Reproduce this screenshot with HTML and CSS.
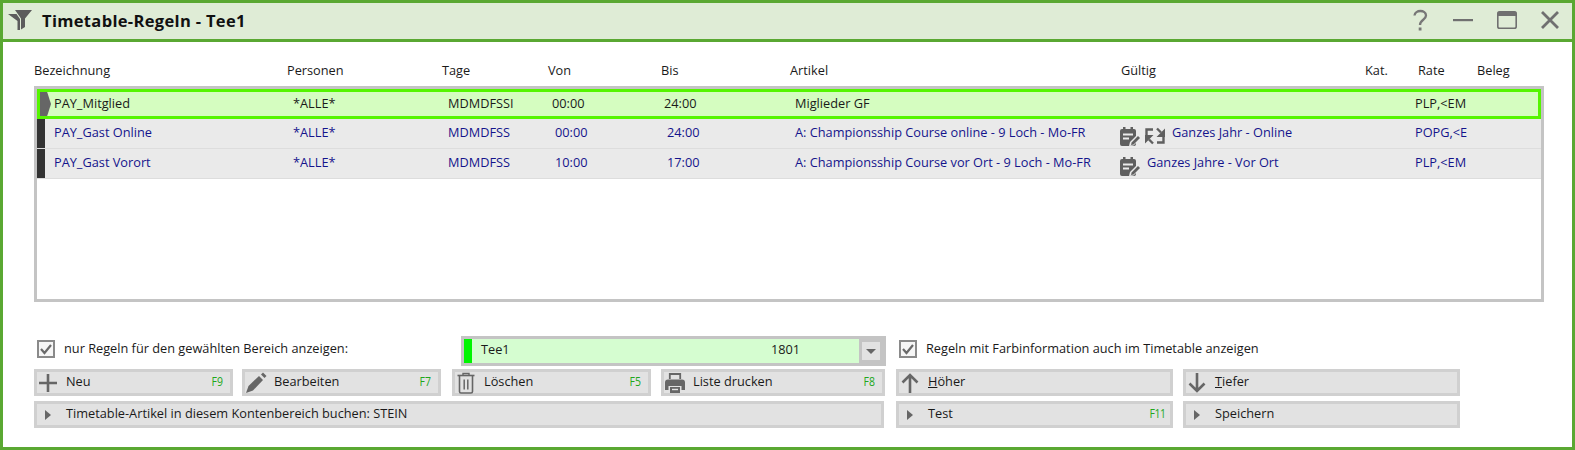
FILE: index.html
```html
<!DOCTYPE html>
<html lang="de">
<head>
<meta charset="utf-8">
<title>Timetable-Regeln - Tee1</title>
<link rel="stylesheet" href="styles.css">
</head>
<body>
<div class="window">
  <header class="titlebar">
    <svg class="title-icon" viewBox="0 0 24 20"><path d="M0 4h8.5l3.5 5v11H9.5V11z" fill="#5c5c5c"/><path d="M7 0h17l-7 8.5V17l-4 2.500V8.500z" fill="#5c5c5c"/></svg>
    <h1 class="title">Timetable-Regeln - Tee1</h1>
    <div class="win-controls">
      <svg class="win-icon" viewBox="0 0 24 24"><path d="M6.500 7.500c.5-6 11.500-6 11.500 0 0 4.500-6 4-6 9.500" fill="none" stroke="#777" stroke-width="2.300"/><rect x="10.700" y="19.500" width="2.800" height="3" fill="#777"/></svg>
      <svg class="win-icon" viewBox="0 0 24 24"><rect x="2" y="11" width="20" height="2.200" fill="#707070"/></svg>
      <svg class="win-icon" viewBox="0 0 24 24"><rect x="2.800" y="3.800" width="18.400" height="16.400" rx="1.800" fill="none" stroke="#707070" stroke-width="1.600"/><rect x="2.800" y="3.800" width="18.400" height="4.200" fill="#707070"/></svg>
      <svg class="win-icon" viewBox="0 0 24 24"><path d="M4 4l16 16M20 4L4 20" stroke="#707070" stroke-width="2.800"/></svg>
    </div>
  </header>
  <main class="content">
    <div class="col-head">
      <span>Bezeichnung</span><span>Personen</span><span>Tage</span><span>Von</span><span>Bis</span><span>Artikel</span><span>Gültig</span><span>Kat.</span><span>Rate</span><span>Beleg</span>
    </div>
    <div class="list">
      <div class="row row-active">
        <span class="row-marker"></span>
        <div class="cells">
          <span>PAY_Mitglied</span><span>*ALLE*</span><span>MDMDFSSI</span><span class="shift-l">00:00</span><span class="shift-l">24:00</span><span>Miglieder GF</span><span></span><span>PLP,&lt;EM</span>
        </div>
      </div>
      <div class="row">
        <span class="row-bar"></span>
        <div class="cells">
          <span>PAY_Gast Online</span><span>*ALLE*</span><span>MDMDFSS</span><span>00:00</span><span>24:00</span><span>A: Championsship Course online - 9 Loch - Mo-FR</span>
          <span class="valid">
            <svg class="cal" viewBox="0 0 22 20"><path d="M1 5a2 2 0 0 1 2-2h1V1h2.500v2h5V1H14v2h1a2 2 0 0 1 2 2v13a2 2 0 0 1-2 2H3a2 2 0 0 1-2-2z" fill="#5f5f5f"/><path d="M4 8.500h10M4 12.500h6" stroke="#eaeaea" stroke-width="1.800"/><path d="M10 20l1-4 8-8 3.500 3.500-8 8z" fill="#eaeaea"/><path d="M12 19l.6-2.500 6.400-6.400 2 2-6.400 6.400z" fill="#5f5f5f"/></svg>
            <svg class="cal" viewBox="0 0 22 20"><path d="M2.500 9V3.500H9M19.500 11v5.500H13M13 2.500l4 4M9 17.500l-4-4" fill="none" stroke="#5f5f5f" stroke-width="2.400"/><path d="M21 2.500V11h-8.500zM1 9h8.500L1 17.500z" fill="#5f5f5f"/></svg>
            <span class="valid-text">Ganzes Jahr - Online</span>
          </span>
          <span>POPG,&lt;E</span>
        </div>
      </div>
      <div class="row">
        <span class="row-bar"></span>
        <div class="cells">
          <span>PAY_Gast Vorort</span><span>*ALLE*</span><span>MDMDFSS</span><span>10:00</span><span>17:00</span><span>A: Championsship Course vor Ort - 9 Loch - Mo-FR</span>
          <span class="valid">
            <svg class="cal" viewBox="0 0 22 20"><path d="M1 5a2 2 0 0 1 2-2h1V1h2.500v2h5V1H14v2h1a2 2 0 0 1 2 2v13a2 2 0 0 1-2 2H3a2 2 0 0 1-2-2z" fill="#5f5f5f"/><path d="M4 8.500h10M4 12.500h6" stroke="#eaeaea" stroke-width="1.800"/><path d="M10 20l1-4 8-8 3.500 3.500-8 8z" fill="#eaeaea"/><path d="M12 19l.6-2.500 6.400-6.400 2 2-6.400 6.400z" fill="#5f5f5f"/></svg>
            <span class="valid-text">Ganzes Jahre - Vor Ort</span>
          </span>
          <span>PLP,&lt;EM</span>
        </div>
      </div>
    </div>
    <div class="controls">
      <div class="ctl-row opts">
        <label class="check check-a"><span class="box"><svg viewBox="0 0 14 14"><path d="M2 7l3.500 4L12 3" fill="none" stroke="#6a6a6a" stroke-width="2.200"/></svg></span><span class="check-text">nur Regeln für den gewählten Bereich anzeigen:</span></label>
        <div class="combo">
          <span class="combo-flag"></span>
          <span class="combo-name">Tee1</span>
          <span class="combo-num">1801</span>
          <span class="combo-side"><span class="combo-btn"><span class="tri-down"></span></span></span>
        </div>
        <label class="check check-b"><span class="box"><svg viewBox="0 0 14 14"><path d="M2 7l3.500 4L12 3" fill="none" stroke="#6a6a6a" stroke-width="2.200"/></svg></span><span class="check-text">Regeln mit Farbinformation auch im Timetable anzeigen</span></label>
      </div>
      <div class="ctl-row btns">
        <button class="btn w-std"><svg class="ico" viewBox="0 0 22 22"><path d="M11 2v18M2 11h18" stroke="#666" stroke-width="2.600"/></svg><span class="lbl">Neu</span><span class="key">F9</span></button>
        <button class="btn w-std gap-9"><svg class="ico" viewBox="0 0 22 22"><path d="M1 21l2.500-7L14 4l4 4L8 18.500z" fill="#666"/><path d="M16 2.500L18 .5l3.500 3.500-2 2z" fill="#666"/></svg><span class="lbl">Bearbeiten</span><span class="key">F7</span></button>
        <button class="btn w-std gap-11"><svg class="ico" viewBox="0 0 22 22"><path d="M2.500 3.500h17" stroke="#666" stroke-width="1.600"/><path d="M8 3.500V1.500h6v2" fill="none" stroke="#666" stroke-width="1.400"/><path d="M4.500 4v15.500A1.500 1.500 0 0 0 6 21h10a1.500 1.500 0 0 0 1.500-1.500V4" fill="none" stroke="#666" stroke-width="1.600"/><path d="M9.200 7.500v10M12.800 7.500v10" stroke="#666" stroke-width="1.500"/></svg><span class="lbl">Löschen</span><span class="key">F5</span></button>
        <button class="btn w-list gap-10"><svg class="ico" viewBox="0 0 22 22"><path d="M5.800 7V2h10.400v5" fill="none" stroke="#666" stroke-width="1.800"/><path d="M1 10.500a3 3 0 0 1 3-3h14a3 3 0 0 1 3 3V18h-3.500v-4h-13v4H1z" fill="#666"/><path d="M6 15h10v6H6z" fill="#666"/><path d="M8 17.500h6" stroke="#e2e2e2" stroke-width="1.400"/></svg><span class="lbl">Liste drucken</span><span class="key">F8</span></button>
        <button class="btn w-wide gap-11"><svg class="ico" viewBox="0 0 22 22"><path d="M11 21V3M3.500 10.500L11 3l7.500 7.500" fill="none" stroke="#666" stroke-width="2.600"/></svg><span class="lbl"><u>H</u>öher</span></button>
        <button class="btn w-wide gap-10"><svg class="ico" viewBox="0 0 22 22"><path d="M11 1v18M3.500 11.500L11 19l7.500-7.500" fill="none" stroke="#666" stroke-width="2.600"/></svg><span class="lbl"><u>T</u>iefer</span></button>
      </div>
      <div class="ctl-row btns">
        <button class="btn w-book"><span class="tri"></span><span class="lbl">Timetable-Artikel in diesem Kontenbereich buchen: STEIN</span></button>
        <button class="btn w-wide gap-12"><span class="tri"></span><span class="lbl">Test</span><span class="key key-f11">F11</span></button>
        <button class="btn w-wide gap-10"><span class="tri"></span><span class="lbl">Speichern</span></button>
      </div>
    </div>
  </main>
</div>
</body>
</html>
```
FILE: styles.css
```css
* { box-sizing: border-box; }
html, body { margin: 0; padding: 0; background: #fff; }
body { font-family: "Open Sans", "Liberation Sans", sans-serif; font-size: 12.75px; color: #1a1a1a; }
.window { width: 1575px; height: 450px; border: 3px solid #5aa832; display: flex; flex-direction: column; overflow: hidden; }
.titlebar { height: 39px; flex: none; background: #dfecd6; border-bottom: 3px solid #5aa832; display: flex; align-items: center; padding: 0 10px 2px 5px; }
.title-icon { width: 24px; height: 20px; flex: none; }
.title { margin: 0 0 0 10px; font-size: 16.5px; font-weight: 700; color: #111; letter-spacing: .33px; flex: 1; }
.win-controls { display: flex; gap: 19.500px; }
.win-icon { width: 24px; height: 24px; display: block; }
.content { flex: 1; padding: 0 28px 0 31px; display: flex; flex-direction: column; }
.col-head { display: grid; grid-template-columns: 253px 155px 106px 113px 129px 331px 244px 53px 59px 1fr; height: 44px; align-items: end; padding-bottom: 7px; line-height: 17px; }
.list { height: 216px; border: 3px solid #c4c4c4; flex: none; }
.row { height: 30px; display: flex; background: #eaeaea; color: #14148c; border-bottom: 1px solid #ddd; align-items: stretch; }
.row-bar { width: 8px; background: #333; flex: none; }
.row-active { background: #d5fdc0; color: #1a1a1a; border: 3px solid #55f500; }
.row-marker { width: 11px; flex: none; background: #666; clip-path: polygon(0 0, 65% 0, 100% 50%, 65% 100%, 0 100%); margin-right: -3px; }
.cells { flex: 1; display: grid; grid-template-columns: 239px 155px 107px 112px 128px 324px 296px 1fr; align-items: center; padding: 0 0 4px 9px; }
.row-active .cells { padding: 0 0 3px 6px; }
.shift-l { margin-left: -3px; }
.valid { display: flex; align-items: center; gap: 3px; }
.cal { width: 22px; height: 20px; flex: none; margin: 4px 0 -4px; }
.valid-text { margin-left: 3px; }
.controls { margin-top: 33px; display: flex; flex-direction: column; }
.ctl-row { display: flex; }
.opts { height: 32px; align-items: center; }
.check { display: flex; align-items: center; margin-bottom: 4px; }
.check-text { margin-bottom: 2px; }
.check-a { width: 427px; padding-left: 3px; }
.check-b { margin-left: 13px; }
.box { width: 18px; height: 18px; border: 2px solid #8a8a8a; background: #f6f6f6; margin-right: 9px; display: block; flex: none; }
.box svg { display: block; width: 14px; height: 14px; }
.combo { width: 425px; height: 30px; border: 3px solid #c4c4c4; background: #d5fdd0; display: flex; align-items: center; }
.combo-flag { width: 8px; height: 100%; background: #00f500; flex: none; }
.combo-name { margin: 0 0 4px 9px; width: 290px; }
.combo-num { flex: 1; margin-bottom: 4px; }
.combo-side { width: 24px; height: 100%; background: #c4c4c4; display: flex; align-items: center; justify-content: center; flex: none; }
.combo-btn { width: 18px; height: 18px; background: #e2e2e2; display: flex; align-items: center; justify-content: center; }
.tri-down { width: 0; height: 0; border: 5px solid transparent; border-top: 5px solid #666; border-bottom: 0; }
.btns { margin-top: 2px; }
.btns + .btns { margin-top: 5px; }
.btn { height: 27px; border: 3px solid #d0d0d0; background: #e2e2e2; display: flex; align-items: center; padding: 0 7px 4px 0; font: inherit; color: #1a1a1a; text-align: left; }
.ico { width: 22px; height: 22px; flex: none; margin: 4px 0 0; }
.lbl { flex: 1; margin-left: 7px; }
.key { color: #22a81c; display: inline-block; transform: scaleX(.82); transform-origin: right center; }
.key-f11 { margin-right: -2px; letter-spacing: -.6px; }
.w-std { width: 199px; }
.w-list { width: 224px; }
.w-wide { width: 277px; }
.w-book { width: 850px; }
.gap-9 { margin-left: 9px; }
.gap-10 { margin-left: 10px; }
.gap-11 { margin-left: 11px; }
.gap-12 { margin-left: 12px; }
.tri { width: 0; height: 0; border: 5px solid transparent; border-left: 6px solid #666; border-right: 0; margin: 4px 0 0 8px; flex: none; }
.btn .tri + .lbl { margin-left: 15px; }
```
